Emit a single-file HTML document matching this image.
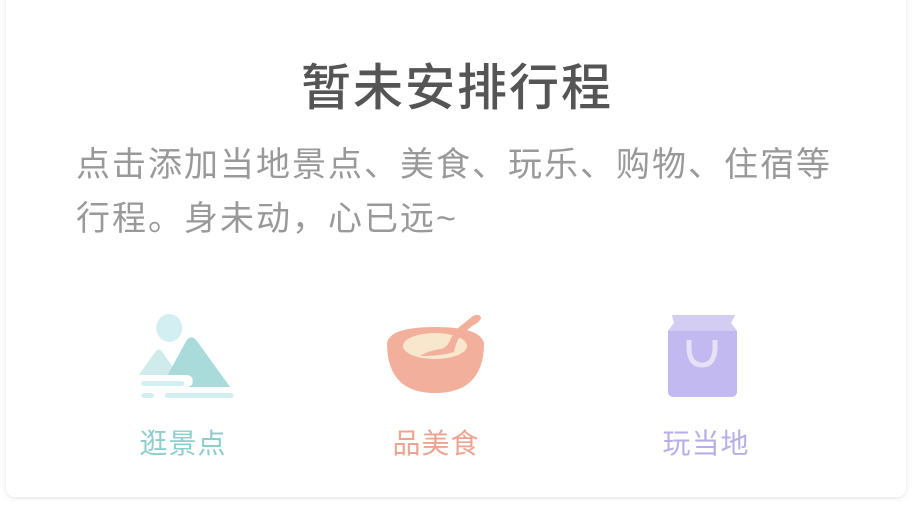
<!DOCTYPE html>
<html><head><meta charset="utf-8"><style>
html,body{margin:0;padding:0;background:#fff;width:912px;height:507px;overflow:hidden;font-family:"Liberation Sans","Noto Sans CJK SC",sans-serif}
.card{position:absolute;left:6px;top:-10px;width:900px;height:507px;background:#fff;border-radius:8px;box-shadow:0 1px 4px rgba(0,0,0,.12)}
.t{position:absolute;left:0;width:912px;top:48px;text-align:center;font-size:50px;color:#555;font-weight:500;letter-spacing:2px;text-indent:2px}
.b{position:absolute;left:76px;top:138px;width:770px;font-size:34px;line-height:54px;color:#999;letter-spacing:2px}
.l{position:absolute;top:422px;font-size:28px;width:140px;text-align:center;letter-spacing:1px}
</style></head><body>
<div class="card"></div>
<div class="t">暂未安排行程</div>
<div class="b">点击添加当地景点、美食、玩乐、购物、住宿等行程。身未动，心已远~</div>
<svg width="912" height="507" style="position:absolute;left:0;top:0">
<g transform="translate(140 0) scale(1.17 1) translate(-139 0)">
<ellipse cx="164" cy="328" rx="11" ry="14" fill="#d4eff1"/>
<path d="M138 375 L152 352 Q155 347 158 352 L172 375 Z" fill="#d0ebec"/>
<path d="M157 387 L178 342 Q182 334 187 340 L216 387 Z" fill="#aadbdb"/>
<rect x="138" y="375" width="46" height="12" rx="5" fill="#fff"/>
<rect x="140" y="381" width="37" height="5" rx="2.5" fill="#d4eff1"/>
<rect x="140" y="393" width="11" height="5" rx="2.5" fill="#d4eff1"/>
<rect x="160" y="393" width="59" height="5" rx="2.5" fill="#d4eff1"/>
</g>
<path d="M387 343 Q390 327 435 327 Q480 327 484 343 Q484 393 435 393 Q387 393 387 343 Z" fill="#f2af9b"/>
<ellipse cx="435" cy="346" rx="32" ry="13" fill="#f8e6cd"/>
<path d="M473 316 Q480 313 481 318 Q480 322 472 326 L460 336 Q455 345 454 352 Q440 356 420 356 Q430 350 441 349 Q448 347 451 338 L458 328 Z" fill="#f2af9b"/>
<path d="M672 315 L735 315 L731 323 L737 331 L737 391 Q737 397 731 397 L674 397 Q668 397 668 391 L668 331 L674 323 Z" fill="#c1b9ef"/>
<path d="M672 315 L735 315 L731 323 L737 331 L668 331 L674 323 Z" fill="#d3cdf4"/>
<path d="M689 340 L689 349 Q690 365 702 365 Q714 365 715 349 L715 340" fill="none" stroke="#e6e1f6" stroke-width="5"/>
</svg>
<div class="l" style="left:113px;color:#8fcdcd">逛景点</div>
<div class="l" style="left:366px;color:#eba48f">品美食</div>
<div class="l" style="left:636px;color:#b8aee6">玩当地</div>
</body></html>
